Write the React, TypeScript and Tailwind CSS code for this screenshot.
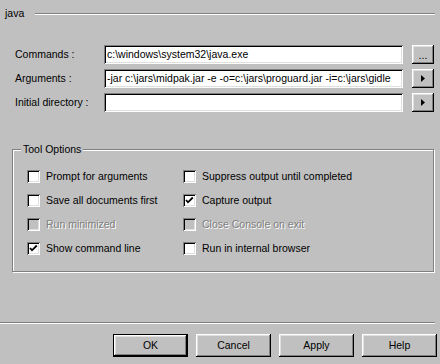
import type { ReactNode } from "react";

const sunken =
  "shadow-[inset_1px_1px_0_#808080,inset_-1px_-1px_0_#ffffff,inset_2px_2px_0_#000000,inset_-2px_-2px_0_#dfdfdf]";
const raised =
  "shadow-[inset_-1px_-1px_0_#000000,inset_1px_1px_0_#ffffff,inset_-2px_-2px_0_#808080,inset_2px_2px_0_#dfdfdf]";

function CheckBox({ label, checked, disabled }: { label: string; checked?: boolean; disabled?: boolean }) {
  return (
    <div className="flex items-center gap-[6px] h-[13px]">
      <div
        className={`w-[13px] h-[13px] shrink-0 flex items-center justify-center ${sunken} ${
          disabled ? "bg-[#c0c0c0]" : "bg-white"
        }`}
      >
        {checked && (
          <svg width="9" height="9" viewBox="0 0 9 9">
            <path d="M1 4 L3 6.3 L7.8 1.5" stroke="#000" strokeWidth="1.8" fill="none" />
          </svg>
        )}
      </div>
      <span
        className={
          disabled ? "text-[#808080] [text-shadow:1px_1px_0_#ffffff]" : "text-black"
        }
      >
        {label}
      </span>
    </div>
  );
}

function Field({ label, value, btn }: { label: string; value: string; btn: ReactNode }) {
  return (
    <div className="flex items-center h-[19px]">
      <div className="w-[104px] pl-[15px]">{label}</div>
      <div className={`w-[299px] h-[19px] bg-white pl-[3px] pr-[2px] flex items-center overflow-hidden whitespace-nowrap ${sunken}`}>
        {value}
      </div>
      <div className={`ml-[9px] w-[22px] h-[19px] bg-[#c0c0c0] flex items-center justify-center ${raised}`}>
        {btn}
      </div>
    </div>
  );
}

function Btn({ children, isDefault }: { children: ReactNode; isDefault?: boolean }) {
  return (
    <div
      className={`w-[75px] h-[23px] flex items-center justify-center bg-[#c0c0c0] ${
        isDefault ? "border border-black" : ""
      } ${raised}`}
    >
      {children}
    </div>
  );
}

const arrow = (
  <svg width="4" height="7" viewBox="0 0 4 7">
    <path d="M0 0 L4 3.5 L0 7 Z" fill="#000" />
  </svg>
);

export default function App() {
  return (
    <div
      className="w-[440px] h-[364px] bg-[#c0c0c0] text-[10.5px] leading-none text-black flex flex-col overflow-hidden"
      style={{ fontFamily: '"Liberation Sans", Arial, sans-serif' }}
    >
      {/* header */}
      <div className="pt-[7px] h-[20px] flex items-center pl-[5px]">
        <span>java</span>
        <div className="ml-[11px] mr-[5px] flex-1 border-t border-t-[#808080] border-b border-b-white" />
      </div>

      {/* fields */}
      <div className="mt-[25px] flex flex-col gap-[5px]">
        <Field label="Commands :" value="c:\windows\system32\java.exe" btn={<span className="mt-[2px]">...</span>} />
        <Field
          label="Arguments :"
          value="-jar c:\jars\midpak.jar -e -o=c:\jars\proguard.jar -i=c:\jars\gidle"
          btn={arrow}
        />
        <Field label="Initial directory :" value="" btn={arrow} />
      </div>

      {/* tool options group */}
      <div className="mt-[37px] ml-[12px] w-[422px] h-[123px] border border-[#808080] shadow-[inset_1px_1px_0_#ffffff,1px_1px_0_#ffffff]">
        <div className="-mt-[7px] ml-[8px] px-[2px] w-fit bg-[#c0c0c0] h-[13px] flex items-center">Tool Options</div>
        <div className="mt-[14px] pl-[14px] grid grid-cols-[156px_1fr] gap-y-[11px]">
          <CheckBox label="Prompt for arguments" />
          <CheckBox label="Suppress output until completed" />
          <CheckBox label="Save all documents first" />
          <CheckBox label="Capture output" checked />
          <CheckBox label="Run minimized" disabled />
          <CheckBox label="Close Console on exit" disabled />
          <CheckBox label="Show command line" checked />
          <CheckBox label="Run in internal browser" />
        </div>
      </div>

      {/* bottom */}
      <div className="mt-[50px] mr-[5px] border-t border-t-[#808080] border-b border-b-white" />
      <div className="mt-[10px] pl-[113px] flex gap-[8px]">
        <Btn isDefault>OK</Btn>
        <Btn>Cancel</Btn>
        <Btn>Apply</Btn>
        <Btn>Help</Btn>
      </div>
    </div>
  );
}
